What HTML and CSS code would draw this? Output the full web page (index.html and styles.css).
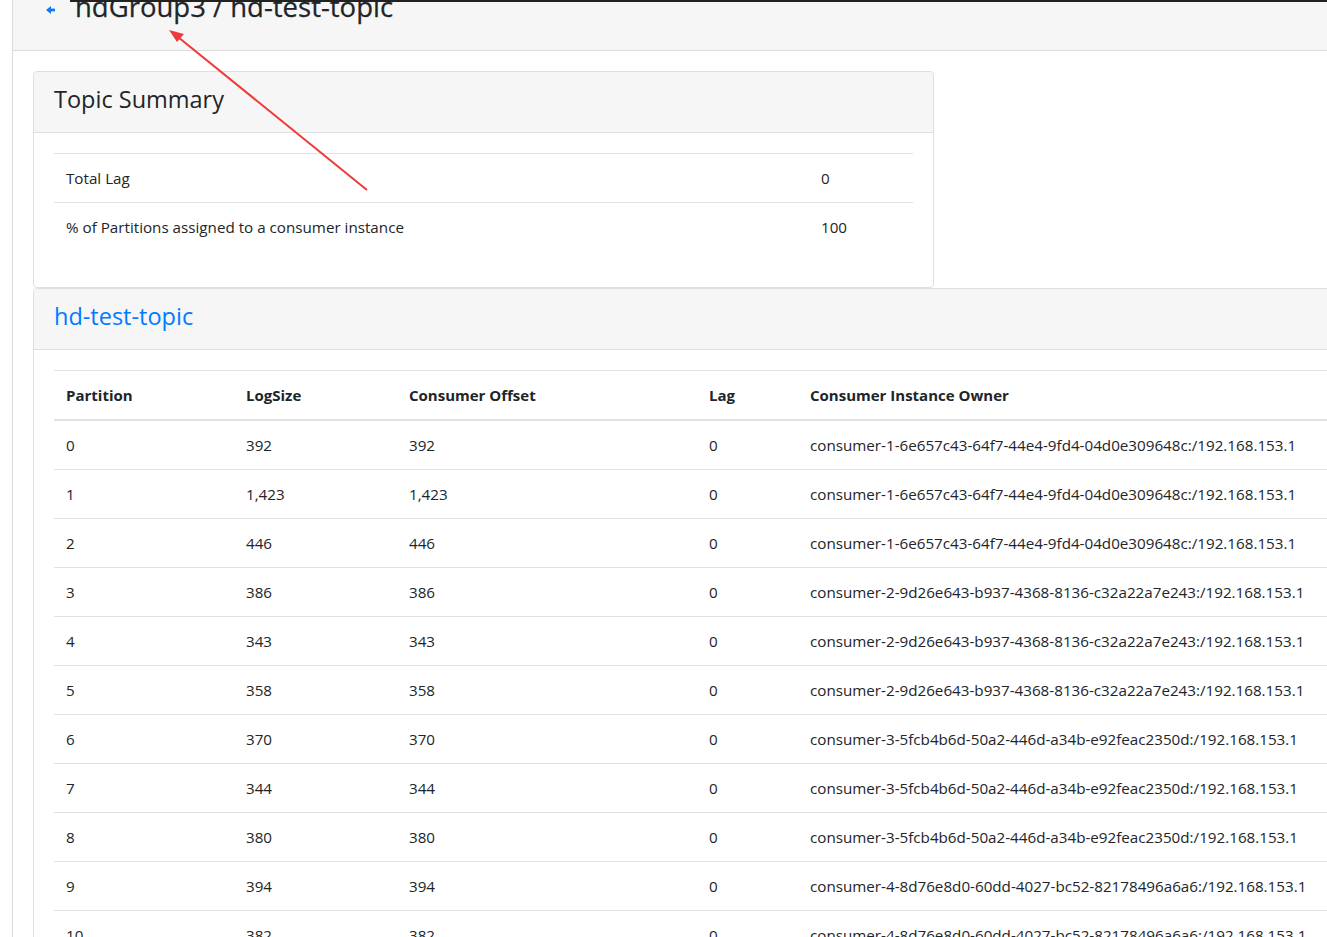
FILE: index.html
```html
<!DOCTYPE html>
<html lang="en">
<head>
<meta charset="utf-8">
<title>hdGroup3 / hd-test-topic</title>
<link rel="stylesheet" href="styles.css">
</head>
<body>
<div class="topline"></div>
<div class="wrapper">
  <div class="page-header">
    <a class="back" href="#"><svg width="10" height="8" viewBox="0 0 10 8"><polygon points="0,4 5,0 5,8" fill="#0d7bf2"/><rect x="4" y="2.6" width="5" height="2.8" fill="#0d7bf2"/></svg></a>
    <h1 class="title">hdGroup3 / hd-test-topic</h1>
  </div>
  <div class="content">
    <div class="card card-summary">
      <div class="card-header"><h4 class="card-title">Topic Summary</h4></div>
      <div class="card-body">
        <table class="table table-summary">
          <tbody>
            <tr><td class="c-label">Total Lag</td><td>0</td></tr>
            <tr><td class="c-label">% of Partitions assigned to a consumer instance</td><td>100</td></tr>
          </tbody>
        </table>
      </div>
    </div>
    <div class="card card-topic">
      <div class="card-header"><h4 class="card-title"><a class="topic-link" href="#">hd-test-topic</a></h4></div>
      <div class="card-body">
        <table class="table table-parts">
          <thead>
            <tr><th class="c-part">Partition</th><th class="c-log">LogSize</th><th class="c-off">Consumer Offset</th><th class="c-lag">Lag</th><th>Consumer Instance Owner</th></tr>
          </thead>
          <tbody>
            <tr><td>0</td><td>392</td><td>392</td><td>0</td><td>consumer-1-6e657c43-64f7-44e4-9fd4-04d0e309648c:/192.168.153.1</td></tr>
            <tr><td>1</td><td>1,423</td><td>1,423</td><td>0</td><td>consumer-1-6e657c43-64f7-44e4-9fd4-04d0e309648c:/192.168.153.1</td></tr>
            <tr><td>2</td><td>446</td><td>446</td><td>0</td><td>consumer-1-6e657c43-64f7-44e4-9fd4-04d0e309648c:/192.168.153.1</td></tr>
            <tr><td>3</td><td>386</td><td>386</td><td>0</td><td>consumer-2-9d26e643-b937-4368-8136-c32a22a7e243:/192.168.153.1</td></tr>
            <tr><td>4</td><td>343</td><td>343</td><td>0</td><td>consumer-2-9d26e643-b937-4368-8136-c32a22a7e243:/192.168.153.1</td></tr>
            <tr><td>5</td><td>358</td><td>358</td><td>0</td><td>consumer-2-9d26e643-b937-4368-8136-c32a22a7e243:/192.168.153.1</td></tr>
            <tr><td>6</td><td>370</td><td>370</td><td>0</td><td>consumer-3-5fcb4b6d-50a2-446d-a34b-e92feac2350d:/192.168.153.1</td></tr>
            <tr><td>7</td><td>344</td><td>344</td><td>0</td><td>consumer-3-5fcb4b6d-50a2-446d-a34b-e92feac2350d:/192.168.153.1</td></tr>
            <tr><td>8</td><td>380</td><td>380</td><td>0</td><td>consumer-3-5fcb4b6d-50a2-446d-a34b-e92feac2350d:/192.168.153.1</td></tr>
            <tr><td>9</td><td>394</td><td>394</td><td>0</td><td>consumer-4-8d76e8d0-60dd-4027-bc52-82178496a6a6:/192.168.153.1</td></tr>
            <tr><td>10</td><td>382</td><td>382</td><td>0</td><td>consumer-4-8d76e8d0-60dd-4027-bc52-82178496a6a6:/192.168.153.1</td></tr>
            <tr><td>11</td><td>375</td><td>375</td><td>0</td><td>consumer-4-8d76e8d0-60dd-4027-bc52-82178496a6a6:/192.168.153.1</td></tr>
          </tbody>
        </table>
      </div>
    </div>
  </div>
</div>
<svg class="annot" width="1327" height="937" viewBox="0 0 1327 937">
  <line x1="367" y1="190" x2="178" y2="37" stroke="#f03a3a" stroke-width="2"/>
  <polygon points="169,30 184,34 177,42" fill="#f03a3a"/>
</svg>
</body>
</html>
```
FILE: styles.css
```css
html, body {
  margin: 0;
  padding: 0;
  overflow: hidden;
  background: #fff;
}
body {
  font-family: "Open Sans", "Noto Sans", sans-serif;
  font-size: 15.2px;
  line-height: 24px;
  color: #212529;
  position: relative;
  width: 1327px;
  height: 937px;
}
.topline {
  position: absolute;
  left: 70px;
  right: 0;
  top: 0;
  height: 2px;
  background: #222;
  z-index: 5;
}
.wrapper {
  margin-left: 12px;
  border-left: 1px solid #dcdcdc;
  min-height: 937px;
  width: 1400px;
}
.page-header {
  height: 50px;
  background: #f6f6f6;
  border-bottom: 1px solid #dcdcdc;
  display: flex;
  align-items: flex-start;
  overflow: hidden;
}
.back {
  display: block;
  margin-left: 33px;
  margin-top: 6px;
  line-height: 0;
}
.title {
  margin: -13px 0 0 19px;
  font-size: 27.5px;
  font-weight: 500;
  line-height: 40px;
  color: #212529;
  -webkit-text-stroke: 0.25px #212529;
}
.content {
  padding: 20px 0 0 20px;
}
.card {
  border: 1px solid #dfdfdf;
  border-radius: 4px;
  background: #fff;
}
.card-summary {
  width: 899px;
}
.card-topic {
  width: 1360px;
}
.card-header {
  background: #f6f6f6;
  border-bottom: 1px solid #dfdfdf;
  padding: 12px 20px;
  border-radius: 4px 4px 0 0;
}
.card-title {
  margin: 0 0 6px;
  font-size: 23.5px;
  font-weight: 500;
  line-height: 30px;
}
.topic-link {
  color: #007bff;
  text-decoration: none;
}
.card-body {
  padding: 20px;
}
.table {
  border-collapse: collapse;
  margin-bottom: 16px;
}
.table td, .table th {
  padding: 12px;
  border-top: 1px solid #dee2e6;
  text-align: left;
  vertical-align: top;
  white-space: nowrap;
}
.table th {
  font-weight: 700;
  font-size: 15px;
}
.table thead th {
  border-bottom: 2px solid #dee2e6;
}
.table-summary {
  width: 859px;
}
.c-label {
  width: 731px;
}
.table-parts {
  width: 1320px;
}
.c-part { width: 156px; }
.c-log { width: 139px; }
.c-off { width: 276px; }
.c-lag { width: 77px; }
.annot {
  position: absolute;
  left: 0;
  top: 0;
  pointer-events: none;
  z-index: 10;
}
```
